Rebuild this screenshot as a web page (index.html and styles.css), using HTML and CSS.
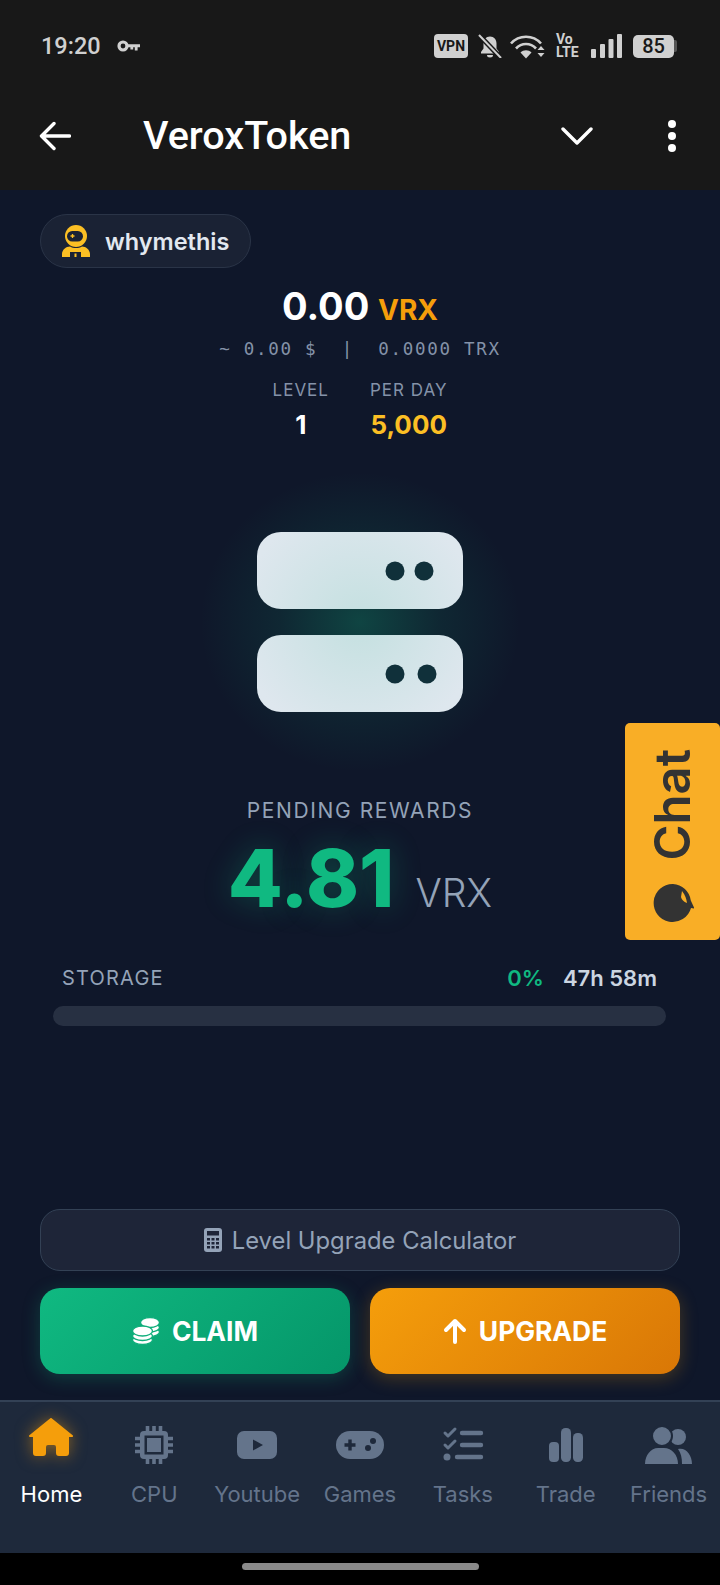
FILE: index.html
```html
<!DOCTYPE html>
<html lang="en">
<head>
    <meta charset="UTF-8">
    <title>VeroxToken</title>
    <link rel="stylesheet" href="styles.css">
</head>
<body>
<header class="top">
    <div class="status">
        <span class="time">19:20</span>
        <svg class="key" width="23" height="12" viewBox="0 0 23 12"><circle cx="6" cy="6" r="4" fill="none" stroke="#d0d0d0" stroke-width="3.2"/><path d="M9 4.2h14v3h-2.4v3.3h-2.8V7.2h-1.6v2.3h-2.8V7.2H9z" fill="#d0d0d0"/></svg>
        <div class="status-right">
            <span class="vpn">VPN</span>
            <svg class="bell" width="24" height="24" viewBox="0 0 24 24"><path d="M12 2.5c-4 0-6.5 3-6.5 7v5L3 18v1.5h18V18l-2.5-3.500v-5c0-4-2.500-7-6.500-7z" fill="#d0d0d0"/><path d="M9 21h6a3 2.500 0 0 1-6 0z" fill="#d0d0d0"/><path d="M1 1l22 23" stroke="#181818" stroke-width="5"/><path d="M1 1l22 23" stroke="#d0d0d0" stroke-width="2"/></svg>
            <svg width="35" height="25" viewBox="0 0 35 25"><g fill="none" stroke="#d0d0d0" stroke-width="2.600"><path d="M1 9.500C9 .5 23 .5 31 9.500"/><path d="M6 14.500c5.500-6 14.500-6 20 0"/></g><path d="M10.500 18.500c3-3 8-3 11 0L16 24.500z" fill="#d0d0d0"/><path d="M27.500 16l3.500-4 3.500 4zM27.500 19h7l-3.500 4z" fill="#d0d0d0"/></svg>
            <span class="volte">Vo LTE</span>
            <svg width="31" height="24" viewBox="0 0 31 24"><g fill="#d0d0d0"><rect x="0" y="15" width="5" height="9" rx="1"/><rect x="9" y="10" width="5" height="14" rx="1"/><rect x="17.500" y="5" width="5" height="19" rx="1"/><rect x="26" y="0" width="5" height="24" rx="1"/></g></svg>
            <span class="battery"><span class="battery-level">85</span><span class="battery-tip"></span></span>
        </div>
    </div>
    <div class="appbar">
        <svg width="32" height="30" viewBox="0 0 32 30"><path d="M30.500 15H3M15 2.500 2.500 15 15 27.500" fill="none" stroke="#fff" stroke-width="3.400" stroke-linecap="round" stroke-linejoin="round"/></svg>
        <span class="title">VeroxToken</span>
        <svg class="chevron" width="32" height="20" viewBox="0 0 32 20"><path d="M2 3l14 14L30 3" fill="none" stroke="#fff" stroke-width="3.400" stroke-linecap="round" stroke-linejoin="round"/></svg>
        <svg class="dots" width="8" height="32" viewBox="0 0 8 32"><circle cx="4" cy="4" r="4" fill="#fff"/><circle cx="4" cy="16" r="4" fill="#fff"/><circle cx="4" cy="28" r="4" fill="#fff"/></svg>
    </div>
</header>

<main class="main">
    <div class="user-pill">
        <svg width="28" height="32" viewBox="0 0 28 32">
            <circle cx="14" cy="11" r="11" fill="#fbbf24"/>
            <rect x="5" y="6" width="16" height="10.500" rx="5.200" fill="#1a2234"/>
            <path d="M10.500 9v4M8.500 11h4" stroke="#fbbf24" stroke-width="1.300"/>
            <path d="M0 32v-3c0-4 4-7.500 8-7.500 3.500 2 8.500 2 12 0 4 0 8 3.500 8 7.500v3z" fill="#fbbf24"/>
            <rect x="8" y="27" width="11" height="5" fill="#1a2234"/>
            <rect x="12.500" y="28.500" width="2" height="3.500" fill="#fbbf24"/>
        </svg>
        <span>whymethis</span>
    </div>

    <div class="balance"><span class="balance-num">0.00</span> <span class="balance-unit">VRX</span></div>
    <div class="balance-sub">~ 0.00 $&nbsp;&nbsp;|&nbsp;&nbsp;0.0000 TRX</div>

    <div class="stats">
        <div class="stat">
            <div class="stat-label">LEVEL</div>
            <div class="stat-value">1</div>
        </div>
        <div class="stat">
            <div class="stat-label">PER DAY</div>
            <div class="stat-value gold">5,000</div>
        </div>
    </div>

    <svg class="server" width="320" height="300" viewBox="0 0 320 300">
        <defs>
            <radialGradient id="glow" cx="50%" cy="50%" r="50%">
                <stop offset="0" stop-color="#10b981" stop-opacity=".28"/>
                <stop offset=".5" stop-color="#10b981" stop-opacity=".1"/>
                <stop offset="1" stop-color="#10b981" stop-opacity="0"/>
            </radialGradient>
            <radialGradient id="plate" gradientUnits="userSpaceOnUse" cx="160" cy="150" r="120">
                <stop offset="0" stop-color="#c4e0e0"/>
                <stop offset="1" stop-color="#dee7ee"/>
            </radialGradient>
        </defs>
        <rect width="320" height="300" fill="url(#glow)"/>
        <rect x="57" y="60" width="206" height="77" rx="24" fill="url(#plate)"/>
        <rect x="57" y="163" width="206" height="77" rx="24" fill="url(#plate)"/>
        <circle cx="195" cy="99" r="9.500" fill="#10303a"/>
        <circle cx="224" cy="99" r="9.500" fill="#10303a"/>
        <circle cx="195" cy="202" r="9.500" fill="#10303a"/>
        <circle cx="227" cy="202" r="9.500" fill="#10303a"/>
    </svg>

    <div class="pending-label">PENDING REWARDS</div>
    <div class="pending"><span class="pending-num">4.81</span><span class="pending-unit">VRX</span></div>

    <div class="storage">
        <div class="storage-row">
            <span class="storage-label">STORAGE</span>
            <span class="storage-pct">0%</span>
            <span class="storage-time">47h 58m</span>
        </div>
        <div class="storage-bar"></div>
    </div>

    <div class="actions">
        <div class="calc">
            <svg width="18" height="24" viewBox="0 0 18 24"><rect width="18" height="24" rx="3" fill="#94a3b8"/><rect x="3" y="3" width="12" height="4.500" fill="#1e2538"/><g fill="#1e2538"><rect x="3" y="10" width="3" height="2.500"/><rect x="7.500" y="10" width="3" height="2.500"/><rect x="12" y="10" width="3" height="2.500"/><rect x="3" y="14" width="3" height="2.500"/><rect x="7.500" y="14" width="3" height="2.500"/><rect x="12" y="14" width="3" height="2.500"/><rect x="3" y="18" width="3" height="2.500"/><rect x="7.500" y="18" width="3" height="2.500"/><rect x="12" y="18" width="3" height="2.500"/></g></svg>
            <span>Level Upgrade Calculator</span>
        </div>
        <div class="btn-row">
            <div class="btn btn-claim">
                <svg width="28" height="28" viewBox="0 0 28 28"><g fill="#fff" stroke="#0fae7b" stroke-width="1.300"><ellipse cx="18" cy="15" rx="9.500" ry="4.500"/><ellipse cx="18" cy="10.500" rx="9.500" ry="4.500"/><ellipse cx="18" cy="5.500" rx="9.500" ry="5"/><ellipse cx="10.500" cy="23" rx="10" ry="4.500"/><ellipse cx="10.500" cy="19" rx="10" ry="4.500"/><ellipse cx="10.500" cy="14" rx="10" ry="5"/></g></svg>
                <span>CLAIM</span>
            </div>
            <div class="btn btn-upgrade">
                <svg width="24" height="26" viewBox="0 0 24 26"><path d="M12 24V3M3 12l9-9 9 9" fill="none" stroke="#fff" stroke-width="4" stroke-linecap="round" stroke-linejoin="round"/></svg>
                <span>UPGRADE</span>
            </div>
        </div>
    </div>

    <div class="chat">
        <svg width="42" height="40" viewBox="0 0 42 40"><path d="M21 1a19 19 0 1 0 18 24l3.500 .5-3.700-8A19 19 0 0 0 21 1z" fill="#333"/><path d="M30 8q4 5 5 12-5-2-6-6z" fill="#f9ae26"/></svg>
        <span class="chat-text">Chat</span>
    </div>
</main>

<nav class="nav">
    <div class="nav-item active">
        <svg class="home-icon" width="56" height="56" viewBox="0 0 56 56"><path d="M28 4 49 21H45V38Q45 40 43 40H36Q34 40 34 38V32Q34 29 31 29H25Q22 29 22 32V38Q22 40 20 40H13Q11 40 11 38V21H7Z" fill="#f59e0b" stroke="#f59e0b" stroke-width="2" stroke-linejoin="round"/></svg>
        <span>Home</span>
    </div>
    <div class="nav-item">
        <svg width="56" height="56" viewBox="0 0 56 56"><g stroke="#64748b" stroke-width="3.600"><path d="M21.500 11v38M28 11v38M34.500 11v38M9 23.500h38M9 30h38M9 36.500h38"/></g><rect x="14" y="16" width="28" height="28" rx="4" fill="#64748b"/><rect x="18.500" y="20.500" width="19" height="19" fill="#1e293b"/><rect x="21" y="23" width="14" height="14" fill="#64748b"/></svg>
        <span>CPU</span>
    </div>
    <div class="nav-item">
        <svg width="56" height="56" viewBox="0 0 56 56"><rect x="8" y="16" width="40" height="28" rx="7" fill="#64748b"/><path d="M24 24.500 34 30 24 35.500z" fill="#1e293b"/></svg>
        <span>Youtube</span>
    </div>
    <div class="nav-item">
        <svg width="56" height="56" viewBox="0 0 56 56"><rect x="4" y="16" width="48" height="28" rx="14" fill="#64748b"/><path d="M18 24.500v11M12.500 30h11" stroke="#1e293b" stroke-width="3.400"/><circle cx="41" cy="26" r="3" fill="#1e293b"/><circle cx="36" cy="33" r="3" fill="#1e293b"/></svg>
        <span>Games</span>
    </div>
    <div class="nav-item">
        <svg width="56" height="56" viewBox="0 0 56 56"><g fill="none" stroke="#64748b" stroke-linecap="round" stroke-linejoin="round"><path d="M10 18l3 3 7-7M10 30l3 3 7-7" stroke-width="3"/><path d="M27 18h19M27 30h19M22 42h24" stroke-width="4.400"/></g><circle cx="12" cy="42" r="3.500" fill="#64748b"/></svg>
        <span>Tasks</span>
    </div>
    <div class="nav-item">
        <svg width="56" height="56" viewBox="0 0 56 56"><g fill="#64748b"><rect x="11" y="27" width="10" height="20" rx="4"/><rect x="23" y="13" width="10" height="34" rx="4.500"/><rect x="35" y="18" width="10" height="29" rx="4.500"/></g></svg>
        <span>Trade</span>
    </div>
    <div class="nav-item">
        <svg width="56" height="56" viewBox="0 0 56 56"><g fill="#64748b"><circle cx="37" cy="22" r="8"/><circle cx="21" cy="21" r="10" stroke="#1e293b" stroke-width="2"/><path d="M37 34c8-2 14 6 14 15H41c0-6-1-11-4-15z"/><path d="M4 49c0-9 6-16 13-16h6c8 0 14 7 14 16z"/></g></svg>
        <span>Friends</span>
    </div>
</nav>
<div class="gesture"><div class="gesture-pill"></div></div>
</body>
</html>
```

FILE: styles.css
```css
* {
    padding: 0;
    margin: 0;
    box-sizing: border-box;
}

body {
    width: 720px;
    height: 1585px;
    display: flex;
    flex-direction: column;
    overflow: hidden;
    background: #000;
    font-family: "Inter", "Liberation Sans", sans-serif;
}

/* system bars */
.top {
    height: 190px;
    background: #181818;
    flex-shrink: 0;
}

.status {
    height: 92px;
    padding: 0 43px 0 41px;
    display: flex;
    align-items: center;
    font-family: "Roboto", sans-serif;
}

.time {
    font-size: 23.500px;
    font-weight: 500;
    color: #d0d0d0;
}

.key {
    margin-left: 16px;
}

.status-right {
    margin-left: auto;
    display: flex;
    align-items: center;
    gap: 11px;
}

.vpn {
    width: 34px;
    height: 24px;
    margin-right: -1px;
    line-height: 24px;
    text-align: center;
    border-radius: 4px;
    background: #d0d0d0;
    color: #181818;
    font-size: 14px;
    font-weight: 700;
}

.bell {
    margin-right: -3px;
}

.volte {
    width: 24px;
    color: #d0d0d0;
    font-size: 14px;
    font-weight: 700;
    line-height: 13px;
}

.battery {
    display: flex;
    align-items: center;
}

.battery-level {
    width: 41px;
    height: 23px;
    line-height: 23px;
    text-align: center;
    border-radius: 5px;
    background: #d0d0d0;
    color: #181818;
    font-size: 20px;
    font-weight: 500;
}

.battery-tip {
    width: 3px;
    height: 12px;
    border-radius: 0 2px 2px 0;
    background: #555;
}

.appbar {
    height: 88px;
    padding: 0 44px 0 39px;
    display: flex;
    align-items: center;
}

.title {
    margin-left: 72px;
    padding-bottom: 2px;
    font-family: "Roboto", sans-serif;
    font-size: 39.500px;
    font-weight: 500;
    color: #fff;
}

.chevron {
    margin-left: auto;
    margin-right: 75px;
}

/* main area */
.main {
    position: relative;
    flex: 1;
    padding: 24px 40px 26px;
    display: flex;
    flex-direction: column;
    background: #0f172a;
}

.user-pill {
    width: 211px;
    height: 54px;
    padding-left: 21px;
    display: flex;
    align-items: center;
    gap: 15px;
    border-radius: 27px;
    border: 1px solid #2a3447;
    background: #1a2234;
    color: #e2e8f0;
    font-size: 23.500px;
    font-weight: 600;
}

.balance {
    margin-top: 15px;
    height: 46px;
    line-height: 46px;
    text-align: center;
    font-weight: 700;
}

.balance-num {
    font-size: 38px;
    color: #fff;
}

.balance-unit {
    margin-left: 5px;
    font-size: 28px;
    color: #f59e0b;
}

.balance-sub {
    margin-top: 8px;
    height: 24px;
    line-height: 24px;
    text-align: center;
    font-family: "DejaVu Sans Mono", monospace;
    font-size: 17.500px;
    letter-spacing: 1.700px;
    color: #8492a8;
}

.stats {
    margin-top: 19px;
    display: flex;
    justify-content: center;
    gap: 41px;
    text-align: center;
}

.stat-label {
    height: 20px;
    line-height: 20px;
    font-size: 17px;
    letter-spacing: 1px;
    color: #8492a8;
}

.stat-value {
    margin-top: 10px;
    height: 30px;
    line-height: 30px;
    font-size: 26px;
    font-weight: 700;
    color: #fff;
}

.gold {
    color: #fbbf24;
}

.server {
    align-self: center;
    flex-shrink: 0;
    margin-top: 32px;
}

.pending-label {
    margin-top: 27px;
    height: 24px;
    line-height: 24px;
    text-align: center;
    font-size: 21px;
    letter-spacing: 1.600px;
    color: #94a3b8;
}

.pending {
    margin-top: 15px;
    height: 80px;
    line-height: 80px;
    display: flex;
    justify-content: center;
    align-items: baseline;
    gap: 21px;
}

.pending-num {
    font-size: 80px;
    font-weight: 800;
    color: #10b981;
    text-shadow: 0 0 30px rgba(16, 185, 129, 0.3);
}

.pending-unit {
    font-size: 39px;
    font-weight: 300;
    color: #94a3b8;
}

.storage {
    margin: 48px 14px 0 13px;
}

.storage-row {
    height: 24px;
    line-height: 24px;
    padding: 0 9px;
    display: flex;
}

.storage-label {
    margin-right: auto;
    font-size: 20px;
    letter-spacing: 1.200px;
    color: #94a3b8;
}

.storage-pct {
    font-size: 22px;
    font-weight: 600;
    color: #10b981;
}

.storage-time {
    margin-left: 19px;
    font-size: 22px;
    font-weight: 600;
    color: #cbd5e1;
}

.storage-bar {
    margin-top: 16px;
    height: 20px;
    border-radius: 10px;
    background: #273042;
}

.actions {
    margin-top: auto;
}

.calc {
    height: 62px;
    display: flex;
    align-items: center;
    justify-content: center;
    gap: 10px;
    border: 1.500px solid #334155;
    border-radius: 20px;
    background: #1e2538;
    color: #94a3b8;
    font-size: 23.800px;
}

.btn-row {
    margin-top: 17px;
    display: flex;
    gap: 20px;
}

.btn {
    flex: 1;
    height: 86px;
    padding-bottom: 1px;
    display: flex;
    align-items: center;
    justify-content: center;
    gap: 12px;
    border-radius: 20px;
    color: #fff;
    font-size: 26.400px;
    font-weight: 700;
}

.btn-claim {
    background: linear-gradient(135deg, #10b981, #059669);
    box-shadow: 0 4px 18px rgba(16, 185, 129, 0.25);
}

.btn-upgrade {
    background: linear-gradient(135deg, #f59e0b, #d97706);
    box-shadow: 0 4px 18px rgba(245, 158, 11, 0.25);
}

.chat {
    position: absolute;
    right: 0;
    top: 533px;
    width: 95px;
    height: 217px;
    padding: 26px 0 0 0;
    display: flex;
    flex-direction: column-reverse;
    justify-content: flex-end;
    align-items: center;
    gap: 22px;
    border-radius: 5px;
    background: #f9ae26;
}

.chat-text {
    writing-mode: vertical-rl;
    transform: rotate(180deg);
    font-size: 49px;
    font-weight: 600;
    line-height: 49px;
    color: #333;
}

/* bottom nav */
.nav {
    height: 153px;
    flex-shrink: 0;
    display: grid;
    grid-template-columns: repeat(7, 1fr);
    border-top: 2px solid #334155;
    background: #1e293b;
}

.nav-item {
    padding-top: 13px;
    display: flex;
    flex-direction: column;
    align-items: center;
    gap: 9px;
    font-size: 22px;
    color: #64748b;
}

.nav-item span {
    line-height: 28px;
}

.nav-item.active {
    color: #fff;
}

.home-icon {
    filter: drop-shadow(0 0 8px rgba(245, 158, 11, 0.5));
}

.gesture {
    height: 32px;
    flex-shrink: 0;
    padding-top: 10px;
    background: #000;
}

.gesture-pill {
    width: 237px;
    height: 7px;
    margin: 0 auto;
    border-radius: 4px;
    background: #8a8a8a;
}
```
